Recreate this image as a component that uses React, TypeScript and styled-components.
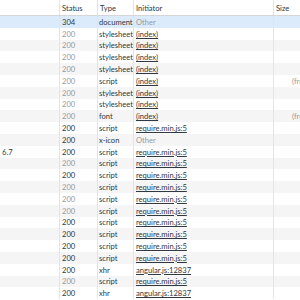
import React from 'react'
import styled, { createGlobalStyle } from 'styled-components'

const GlobalStyle = createGlobalStyle`
  html, body {
    margin: 0;
    padding: 0;
    background: #ffffff;
  }
  body {
    font-family: Lato, "Noto Sans", sans-serif;
    font-size: 7.6px;
    color: #303942;
    overflow: hidden;
  }
`

const Table = styled.div`
  width: 300px;
  height: 300px;
  overflow: hidden;
  background: #ffffff;
`

const Row = styled.div<{ $bg: string; $h: number }>`
  display: grid;
  grid-template-columns: 60px 38px 36px 140px 1fr;
  height: ${(p) => p.$h}px;
  background: ${(p) => p.$bg};
`

const HeaderRow = styled(Row)`
  border-bottom: 1px solid #d6d6d6;
  box-sizing: border-box;
`

const Cell = styled.div<{ $muted?: boolean; $link?: boolean; $indent?: number }>`
  border-right: 1px solid #e4e4e4;
  padding-left: ${(p) => p.$indent ?? 2}px;
  white-space: nowrap;
  overflow: hidden;
  display: flex;
  align-items: center;
  color: ${(p) => (p.$muted ? '#9a9a9a' : '#303942')};
  text-decoration: ${(p) => (p.$link ? 'underline' : 'none')};
  &:last-child {
    border-right: none;
  }
`

type Req = {
  name?: string
  status: string
  cachedStatus?: boolean
  type: string
  initiator: string
  size?: string
}

const rows: Req[] = [
  { status: '304', type: 'document', initiator: 'Other' },
  { status: '200', cachedStatus: true, type: 'stylesheet', initiator: '(index)' },
  { status: '200', cachedStatus: true, type: 'stylesheet', initiator: '(index)' },
  { status: '200', cachedStatus: true, type: 'stylesheet', initiator: '(index)' },
  { status: '200', cachedStatus: true, type: 'stylesheet', initiator: '(index)' },
  { status: '200', cachedStatus: true, type: 'script', initiator: '(index)', size: '(from memory cache)' },
  { status: '200', cachedStatus: true, type: 'stylesheet', initiator: '(index)' },
  { status: '200', cachedStatus: true, type: 'stylesheet', initiator: '(index)' },
  { status: '200', cachedStatus: true, type: 'font', initiator: '(index)', size: '(from memory cache)' },
  { status: '200', type: 'script', initiator: 'require.min.js:5' },
  { status: '200', type: 'x-icon', initiator: 'Other' },
  { name: '6.7', status: '200', type: 'script', initiator: 'require.min.js:5' },
  { status: '200', cachedStatus: true, type: 'script', initiator: 'require.min.js:5' },
  { status: '200', type: 'script', initiator: 'require.min.js:5' },
  { status: '200', cachedStatus: true, type: 'script', initiator: 'require.min.js:5' },
  { status: '200', cachedStatus: true, type: 'script', initiator: 'require.min.js:5' },
  { status: '200', cachedStatus: true, type: 'script', initiator: 'require.min.js:5' },
  { status: '200', type: 'script', initiator: 'require.min.js:5' },
  { status: '200', type: 'script', initiator: 'require.min.js:5' },
  { status: '200', type: 'script', initiator: 'require.min.js:5' },
  { status: '200', type: 'script', initiator: 'require.min.js:5' },
  { status: '200', type: 'xhr', initiator: 'angular.js:12837' },
  { status: '200', cachedStatus: true, type: 'script', initiator: 'require.min.js:5' },
  { status: '200', type: 'xhr', initiator: 'angular.js:12837' },
]

const rowBg = (i: number) => {
  if (i === 0) return '#dcebfc'
  return i % 2 === 0 ? '#f5f5f5' : '#ffffff'
}

export default function App() {
  return (
    <>
      <GlobalStyle />
      <Table>
        <HeaderRow $bg="#ffffff" $h={16}>
          <Cell />
          <Cell>Status</Cell>
          <Cell>Type</Cell>
          <Cell>Initiator</Cell>
          <Cell>Size</Cell>
        </HeaderRow>
        {rows.map((r, i) => (
          <Row key={i} $bg={rowBg(i)} $h={11.8}>
            <Cell>{r.name}</Cell>
            <Cell $muted={r.cachedStatus}>{r.status}</Cell>
            <Cell $indent={1}>{r.type}</Cell>
            <Cell $muted={r.initiator === 'Other'} $link={r.initiator !== 'Other'}>
              {r.initiator}
            </Cell>
            <Cell $muted $indent={18}>{r.size}</Cell>
          </Row>
        ))}
      </Table>
    </>
  )
}
